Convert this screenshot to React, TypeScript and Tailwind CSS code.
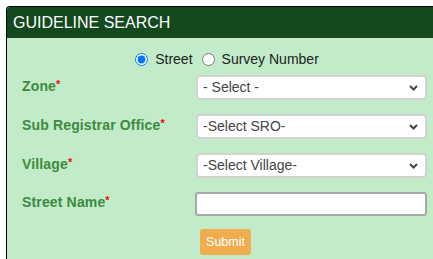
const rows = [
  { label: "Zone", kind: "select", placeholder: "- Select -" },
  { label: "Sub Registrar Office", kind: "select", placeholder: "-Select SRO-" },
  { label: "Village", kind: "select", placeholder: "-Select Village-" },
  { label: "Street Name", kind: "input", placeholder: "" },
];

const Chevron = () => (
  <svg width="9" height="6" viewBox="0 0 9 6" className="pointer-events-none absolute right-[7px] top-1/2 -translate-y-1/2">
    <path d="M1 1 L4.5 4.5 L8 1" fill="none" stroke="#444" strokeWidth="2" />
  </svg>
);

const App = () => {
  return (
    <div className="w-[433px] h-[259px] overflow-hidden bg-white pt-[6px] pl-[6px] font-['Liberation_Sans',Arial,sans-serif]">
      <div className="w-[440px] h-[300px] border-l border-t border-black rounded-tl-[4px] bg-[#c2ebc9]">
        {/* header */}
        <div className="h-[31px] bg-[#14491d] rounded-tl-[3px] pl-[6px] flex items-center">
          <h2 className="text-[16px] text-white leading-none">GUIDELINE SEARCH</h2>
        </div>

        {/* radio */}
        <div className="flex items-center justify-center w-[440px] pt-[8px] h-[34px] text-[14px] text-[#222]">
          <label className="flex items-center">
            <input type="radio" name="mode" defaultChecked className="w-[13px] h-[13px] m-0 mr-[7px]" />
            Street
          </label>
          <label className="flex items-center ml-[9px]">
            <input type="radio" name="mode" className="w-[13px] h-[13px] m-0 mr-[7px]" />
            Survey Number
          </label>
        </div>

        {/* form */}
        <div className="flex flex-col gap-[14px] pl-[15px] pt-[3px]">
          {rows.map((row) => (
            <div key={row.label} className="flex items-center">
              <div className="w-[174px] text-[14px] font-bold tracking-[0.15px] text-[#3c8a3f] -mt-[3px]">
                {row.label}
                <span className="text-[#ff0000] text-[11px] align-top">*</span>
              </div>
              {row.kind === "select" ? (
                <div className="relative w-[231px] h-[25px] bg-white border-2 border-[#d2d2d2] rounded-[4px] flex items-center pl-[5px] text-[14px] text-[#444]">
                  {row.placeholder}
                  <Chevron />
                </div>
              ) : (
                <input
                  type="text"
                  className="w-[232px] h-[24px] bg-white border-2 border-[#a8a8a8] rounded-[3px] ml-[-1px] outline-none"
                />
              )}
            </div>
          ))}
          <div className="pl-[178px] -mt-[1px]">
            <button className="w-[51px] h-[26px] bg-[#efad4e] rounded-[3px] text-white text-[12.5px]">
              Submit
            </button>
          </div>
        </div>
      </div>
    </div>
  );
};

export default App;
